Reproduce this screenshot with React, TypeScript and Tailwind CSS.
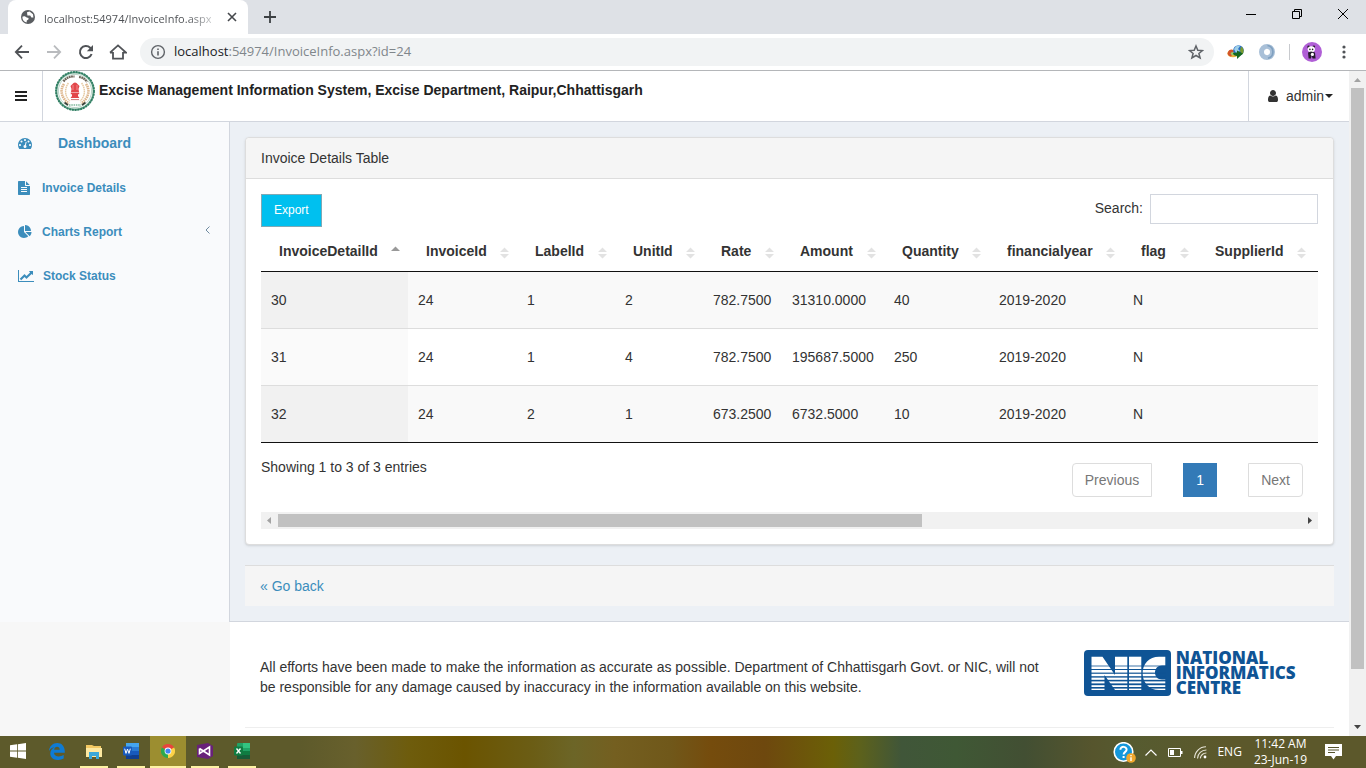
import React from "react";

const faPaths = {
  dashboard:
    "M384 1152q0-53-37.5-90.5t-90.5-37.5-90.5 37.5-37.5 90.5 37.5 90.5 90.5 37.5 90.5-37.5 37.5-90.5zm192-448q0-53-37.5-90.5t-90.5-37.5-90.5 37.5-37.5 90.5 37.5 90.5 90.5 37.5 90.5-37.5 37.5-90.5zm428 481l101-382q6-26-7.5-48.5t-38.5-29.5-48 6.5-30 39.5l-101 382q-60 5-107 43.5t-63 98.5q-20 77 20 146t117 89 146-20 89-117q16-60-6-117t-72-91zm660-33q0-53-37.5-90.5t-90.5-37.5-90.5 37.5-37.5 90.5 37.5 90.5 90.5 37.5 90.5-37.5 37.5-90.5zm-640-640q0-53-37.5-90.5t-90.5-37.5-90.5 37.5-37.5 90.5 37.5 90.5 90.5 37.5 90.5-37.5 37.5-90.5zm448 192q0-53-37.5-90.5t-90.5-37.5-90.5 37.5-37.5 90.5 37.5 90.5 90.5 37.5 90.5-37.5 37.5-90.5zm320 448q0 261-141 483-19 29-54 29h-1402q-35 0-54-29-141-221-141-483 0-182 71-348t191-286 286-191 348-71 348 71 286 191 191 286 71 348z",
  file:
    "M1596 476q14 14 28 36h-472v-472q22 14 36 28zm-476 164h544v1056q0 40-28 68t-68 28h-1344q-40 0-68-28t-28-68v-1600q0-40 28-68t68-28h800v544q0 40 28 68t68 28zm160 736v-64q0-14-9-23t-23-9h-704q-14 0-23 9t-9 23v64q0 14 9 23t23 9h704q14 0 23-9t9-23zm0-256v-64q0-14-9-23t-23-9h-704q-14 0-23 9t-9 23v64q0 14 9 23t23 9h704q14 0 23-9t9-23zm0-256v-64q0-14-9-23t-23-9h-704q-14 0-23 9t-9 23v64q0 14 9 23t23 9h704q14 0 23-9t9-23z",
  pie:
    "M768 890l546 546q-106 108-247.5 168t-298.5 60q-209 0-385.5-103t-279.5-279.5-103-385.5 103-385.5 279.5-279.5 385.5-103v762zm187 6h773q0 157-60 298.5t-168 247.5zm709-128h-768v-768q209 0 385.5 103t279.5 279.5 103 385.5z",
  line:
    "M2048 1536v128h-2048v-1536h128v1408h1920zm-128-1248v435q0 21-19.5 29.5t-35.5-7.5l-121-121-633 633q-10 10-23 10t-23-10l-233-233-416 416-192-192 585-585q10-10 23-10t23 10l233 233 464-464-121-121q-16-16-7.5-35.5t29.5-19.5h435q14 0 23 9t9 23z",
  user:
    "M1536 1399q0 109-62.5 187t-150.5 78h-854q-88 0-150.5-78t-62.5-187q0-85 8.5-160.5t31.5-152 58.5-131 94-89 134.5-34.5q131 128 313 128t313-128q76 0 134.5 34.5t94 89 58.5 131 31.5 152 8.5 160.5zm-256-887q0 159-112.5 271.5t-271.5 112.5-271.5-112.5-112.5-271.5 112.5-271.5 271.5-112.5 271.5 112.5 112.5 271.5z",
};

function Fa({ d, box = "0 0 1792 1792", className }: { d: string; box?: string; className: string }) {
  return (
    <svg viewBox={box} className={className} fill="currentColor" aria-hidden="true">
      <path d={d} />
    </svg>
  );
}

function TabStrip() {
  return (
    <div className="flex h-[34px] shrink-0 items-stretch bg-[#dee1e6]">
      <div className="ml-2 flex w-[240px] items-center rounded-t-lg bg-white pl-3 pr-2">
        <svg viewBox="0 0 16 16" className="size-4 shrink-0" aria-hidden="true">
          <circle cx="8" cy="8" r="7" fill="#5a5d61" />
          <path d="M2.4 7.8 C4 6.6 5.8 7.6 6.6 8.6 L8.6 9 L8.4 10.6 L6.8 11.4 L6.6 13.6 C3.8 13 2.2 10.6 2.4 7.8Z" fill="#fff" />
          <path d="M7 3.2 L9.6 2.6 L13 5.2 L13.4 8.6 L11.4 8.4 L10.2 6.6 L7.4 6.4 Z" fill="#fff" />
        </svg>
        <span className="ml-2 flex-1 whitespace-nowrap">
          <span className="bg-gradient-to-r from-[#4a4d51] from-85% to-[#c4c6c8] bg-clip-text text-[11px] text-transparent">
            localhost:54974/InvoiceInfo.aspx
          </span>
        </span>
        <button aria-label="Close tab" className="flex size-4 items-center justify-center">
          <svg viewBox="0 0 10 10" className="size-[10px]" stroke="#45484c" strokeWidth="1.6" aria-hidden="true">
            <path d="M1 1L9 9M9 1L1 9" />
          </svg>
        </button>
      </div>
      <button aria-label="New tab" className="ml-3 flex w-5 items-center justify-center">
        <svg viewBox="0 0 12 12" className="size-3" stroke="#3c4043" strokeWidth="1.8" aria-hidden="true">
          <path d="M6 0V12M0 6H12" />
        </svg>
      </button>
      <div className="ml-auto flex h-7">
        <button aria-label="Minimize" className="flex w-[46px] items-center justify-center">
          <svg viewBox="0 0 10 10" className="size-[10px]" stroke="#000" aria-hidden="true"><path d="M0 5.5H10" /></svg>
        </button>
        <button aria-label="Restore" className="flex w-[46px] items-center justify-center">
          <svg viewBox="0 0 10 10" className="size-[10px]" stroke="#000" fill="none" aria-hidden="true"><path d="M.5 2.5H7.5V9.5H.5ZM2.5 2.5V.5H9.5V7.5H7.5" /></svg>
        </button>
        <button aria-label="Close window" className="flex w-[46px] items-center justify-center">
          <svg viewBox="0 0 10 10" className="size-[10px]" stroke="#000" aria-hidden="true"><path d="M0 0L10 10M10 0L0 10" /></svg>
        </button>
      </div>
    </div>
  );
}

function Toolbar() {
  return (
    <div className="flex h-[37px] shrink-0 items-center border-b border-[#b4b6b9] bg-white pl-3 pr-[14px]">
      <button aria-label="Back" className="flex w-5 justify-center">
        <svg viewBox="0 0 16 16" className="size-4" stroke="#505357" strokeWidth="1.8" fill="none" aria-hidden="true"><path d="M15 8H2M8 1.6L1.8 8L8 14.4" /></svg>
      </button>
      <button aria-label="Forward" className="ml-3 flex w-5 justify-center">
        <svg viewBox="0 0 16 16" className="size-4" stroke="#b9bbbe" strokeWidth="1.8" fill="none" aria-hidden="true"><path d="M1 8H14M8 1.6L14.2 8L8 14.4" /></svg>
      </button>
      <button aria-label="Reload" className="ml-3 flex w-5 justify-center">
        <svg viewBox="0 0 16 16" className="size-4" stroke="#505357" strokeWidth="2" fill="none" aria-hidden="true">
          <path d="M13.6 10A6 6 0 1 1 12.2 3.8L13.6 5.4" />
          <path d="M15 1V7.2H8.8Z" fill="#505357" stroke="none" />
        </svg>
      </button>
      <button aria-label="Home" className="ml-3 flex w-5 justify-center">
        <svg viewBox="0 0 18 16" className="h-4 w-[18px]" stroke="#505357" strokeWidth="1.8" fill="none" aria-hidden="true"><path d="M4 8V14.6H14V8M1 8.6L9 1.4L17 8.6H14M1 8.6H4" /></svg>
      </button>
      <div className="ml-3 flex h-7 flex-1 items-center rounded-full bg-[#f1f3f4] pl-[10px] pr-[10px]">
        <svg viewBox="0 0 16 16" className="size-4" aria-hidden="true">
          <circle cx="8" cy="8" r="6.4" fill="none" stroke="#5f6368" strokeWidth="1.4" />
          <path d="M8 7.2V11.4M8 4.4V6" stroke="#5f6368" strokeWidth="1.6" />
        </svg>
        <span className="ml-2 flex-1 text-[13px] text-[#80868b]">
          <span className="text-[#202124]">localhost</span>:54974/InvoiceInfo.aspx?id=24
        </span>
        <button aria-label="Bookmark this page">
          <svg viewBox="0 0 16 16" className="size-4" fill="none" stroke="#5f6368" strokeWidth="1.5" aria-hidden="true"><path d="M8 2L9.8 6.3L14.5 6.6L10.9 9.5L12.1 14L8 11.5L3.9 14L5.1 9.5L1.5 6.6L6.2 6.3Z" /></svg>
        </button>
      </div>
      <svg viewBox="0 0 18 16" className="ml-[13px] h-4 w-[18px]" aria-hidden="true">
        <ellipse cx="6" cy="9.5" rx="5.6" ry="3.8" fill="#e8b33c" />
        <path d="M1 8C3 4.6 6 5 7 8L4 12.6C1 12 0 10 1 8Z" fill="#d3532b" />
        <ellipse cx="6" cy="9.6" rx="2.4" ry="1.6" fill="#9bc96b" />
        <circle cx="11.5" cy="6.5" r="5.3" fill="#2a6fc5" />
        <path d="M7 5C9 1 12 1 13 2L11 5L13 7L9 9Z" fill="#9fd0e8" />
        <path d="M14 2.5C17 4 17.4 8 15.4 10.4L13 7Z" fill="#7a9c2f" />
        <path d="M6 9L10 8.4V6.4L16 9.4L10 15V12C8 12 6 11 6 9Z" fill="#17691e" />
      </svg>
      <svg viewBox="0 0 16 16" className="ml-[14px] size-4" fill="none" aria-hidden="true">
        <circle cx="8" cy="8" r="5.5" stroke="#a9c0d8" strokeWidth="5" />
        <path d="M8.5 1.5A6.5 6.5 0 0 1 9 14.2" stroke="#7fa0c0" strokeWidth="1.6" />
        <path d="M8 4.5C5.5 6 6 9 8 11.5C10.5 10 10 6 8 4.5Z" fill="#fff" />
      </svg>
      <div className="ml-[14px] h-4 w-px bg-[#c8cace]" />
      <svg viewBox="0 0 20 20" className="ml-3 size-5" aria-hidden="true">
        <circle cx="10" cy="10" r="10" fill="#b05fd6" />
        <circle cx="6.6" cy="4.9" r="1.3" fill="#241c2b" /><circle cx="11.8" cy="4.7" r="1.3" fill="#241c2b" />
        <ellipse cx="9.3" cy="7.2" rx="3.6" ry="2.9" fill="#fff" />
        <path d="M6 10.4L9 9.6L13 10.4L13.6 16.4H10.6L9.6 13.6L9 16.4H6.6Z" fill="#241c2b" />
        <ellipse cx="10.4" cy="12.4" rx="1.6" ry="1.6" fill="#fff" />
        <circle cx="7.9" cy="7.4" r=".8" fill="#241c2b" /><circle cx="10.6" cy="7.4" r=".8" fill="#241c2b" />
      </svg>
      <button aria-label="Browser menu" className="ml-[14px] flex w-4 justify-center">
        <svg viewBox="0 0 4 14" className="h-[14px] w-1" fill="#505357" aria-hidden="true"><circle cx="2" cy="2" r="1.6" /><circle cx="2" cy="7" r="1.6" /><circle cx="2" cy="12" r="1.6" /></svg>
      </button>
    </div>
  );
}

function Emblem() {
  return (
    <svg viewBox="0 0 40 40" className="size-10 shrink-0" role="img" aria-label="Government of Chhattisgarh emblem">
      <circle cx="20" cy="20" r="18.6" fill="#fff" stroke="#6fa890" strokeWidth="2" />
      <circle cx="20" cy="20" r="19" fill="none" stroke="#2e7d62" strokeWidth="1.8" strokeDasharray="2 .8" />
      <circle cx="20" cy="20" r="16.6" fill="none" stroke="#a9cbbb" strokeWidth=".8" />
      <path d="M8.5 10.5C11 7 15 5 19.5 5.6M24 6C27.5 6.4 30 8 32 11" fill="none" stroke="#6c6256" strokeWidth="2.2" strokeDasharray="1.8 .5" />
      <path d="M9 13C4.5 19 6.5 27.5 14 32.5M31 13C35.5 19 33.5 27.5 26 32.5" fill="none" stroke="#dcb489" strokeWidth="2.6" strokeDasharray="1.5 .7" />
      <path d="M13.4 12C9 18 10 26 15 30M26.6 12C31 18 30 26 25 30" fill="none" stroke="#e6caa2" strokeWidth="1.4" strokeDasharray="1.6 .5" />
      <path d="M17 13.4Q20 9.6 23 13.4L24.5 15L23.5 18L24 21H16L16.5 18L15.5 15Z" fill="#e2474b" />
      <path d="M15.8 21.6H24.2V23.2H23V25L24.4 27H15.6L17 25V23.2H15.8Z" fill="#e2474b" />
      <path d="M18 14V19M22 14V19" stroke="#fbb" strokeWidth=".6" />
      <path d="M16 28.6H24" stroke="#c66" strokeWidth=".9" />
      <path d="M9.5 31.5L13 34M30.5 31.5L27 34" stroke="#3b4038" strokeWidth="1.6" />
      <path d="M14 34H26" stroke="#7fb89c" strokeWidth="1.6" strokeDasharray="1.5 .8" />
    </svg>
  );
}

function SiteHeader() {
  return (
    <header className="flex h-[51px] items-stretch border-b border-[#d2d6de] bg-white">
      <button aria-label="Toggle navigation" className="flex w-[43px] items-center justify-center border-r border-[#d2d6de]">
        <svg viewBox="0 0 12 10" className="h-[10px] w-3" fill="#222" aria-hidden="true"><path d="M0 0H12V2H0ZM0 4H12V6H0ZM0 8H12V10H0Z" /></svg>
      </button>
      <div className="flex flex-1 items-start pl-3">
        <Emblem />
        <h1 className="ml-1 mt-[9px] text-sm font-bold text-[#222]">
          Excise Management Information System, Excise Department, Raipur,Chhattisgarh
        </h1>
      </div>
      <button className="flex w-[101px] items-center border-l border-[#d2d6de] pl-[17px] text-sm text-[#333]">
        <Fa d={faPaths.user} className="size-[14px]" />
        <span className="ml-[6px]">admin</span>
        <svg viewBox="0 0 8 4" className="ml-px h-1 w-2" fill="#222" aria-hidden="true"><path d="M0 0H8L4 4Z" /></svg>
      </button>
    </header>
  );
}

function Sidebar() {
  return (
    <nav className="flex flex-col bg-[#f9fafc] font-bold text-[#3c8dbc]">
      <a href="#dashboard" className="flex h-11 items-center pb-[2px] pl-[18px] text-sm">
        <Fa d={faPaths.dashboard} className="size-[14px]" />
        <span className="ml-[26px]">Dashboard</span>
      </a>
      <a href="#invoice" className="flex h-11 items-center pl-[17px] text-xs">
        <Fa d={faPaths.file} className="size-[14px]" />
        <span className="ml-[11px]">Invoice Details</span>
      </a>
      <a href="#charts" className="flex h-11 items-center pl-[18px] pr-[19px] text-xs">
        <Fa d={faPaths.pie} className="size-[14px]" />
        <span className="ml-[10px] flex-1">Charts Report</span>
        <svg viewBox="0 0 5 8" className="mb-1 h-2 w-[5px]" fill="none" stroke="#6f8aa0" aria-hidden="true"><path d="M4.5 .5L1 4L4.5 7.5" /></svg>
      </a>
      <a href="#stock" className="flex h-11 items-center pl-[18px] text-xs">
        <Fa d={faPaths.line} box="0 0 2048 1792" className="h-[14px] w-4" />
        <span className="ml-[9px]">Stock Status</span>
      </a>
    </nav>
  );
}

const columns = [
  { name: "InvoiceDetailId", width: "w-[147px]" },
  { name: "InvoiceId", width: "w-[109px]" },
  { name: "LabelId", width: "w-[98px]" },
  { name: "UnitId", width: "w-[88px]" },
  { name: "Rate", width: "w-[79px]" },
  { name: "Amount", width: "w-[102px]" },
  { name: "Quantity", width: "w-[105px]" },
  { name: "financialyear", width: "w-[134px]" },
  { name: "flag", width: "w-[74px]" },
  { name: "SupplierId", width: "" },
];

const rows = [
  ["30", "24", "1", "2", "782.7500", "31310.0000", "40", "2019-2020", "N", ""],
  ["31", "24", "1", "4", "782.7500", "195687.5000", "250", "2019-2020", "N", ""],
  ["32", "24", "2", "1", "673.2500", "6732.5000", "10", "2019-2020", "N", ""],
];

function InvoiceTable() {
  return (
    <table className="w-full table-fixed border-collapse text-sm">
      <thead>
        <tr className="border-b border-[#111]">
          {columns.map((c, i) => (
            <th key={c.name} scope="col" className={`h-11 p-0 pt-1 text-left font-bold ${c.width}`}>
              <button className={`flex w-full items-center justify-between pl-[18px] ${i === 9 ? "pr-3" : "pr-2"}`}>
                <span>{c.name}</span>
                {i === 0 ? (
                  <svg viewBox="0 0 9 12" className="h-3 w-[9px]" fill="#999" aria-hidden="true"><path d="M0 6H9L4.5 1.5Z" /></svg>
                ) : (
                  <svg viewBox="0 0 9 12" className="mt-1 h-3 w-[9px]" fill="#e2e2e2" aria-hidden="true"><path d="M0 5H9L4.5 .5ZM0 7H9L4.5 11.5Z" /></svg>
                )}
              </button>
            </th>
          ))}
        </tr>
      </thead>
      <tbody>
        {rows.map((r, n) => (
          <tr key={r[0]} className="h-[57px] border-b border-[#ddd] bg-white last:border-[#111] odd:bg-[#f9f9f9]">
            {r.map((v, i) => (
              <td key={i} className={`px-[10px] py-0 ${i === 0 ? (n % 2 ? "bg-[#fafafa]" : "bg-[#f1f1f1]") : ""}`}>{v}</td>
            ))}
          </tr>
        ))}
      </tbody>
    </table>
  );
}

function InvoicePanel() {
  return (
    <section className="rounded border border-[#ddd] bg-white shadow-sm">
      <h2 className="rounded-t border-b border-[#ddd] bg-[#f5f5f5] px-[15px] py-[10px] text-sm">Invoice Details Table</h2>
      <div className="p-[15px]">
        <div className="flex items-start justify-between">
          <button className="h-[33px] border border-[#7fa9b5] bg-[#00c0ef] px-3 pb-[2px] text-xs text-white">Export</button>
          <label className="flex items-start text-sm leading-7">
            Search:
            <input type="search" className="ml-[7px] h-[30px] w-[168px] border border-[#d2d6de] bg-white px-2 outline-none" />
          </label>
        </div>
        <InvoiceTable />
        <div className="flex h-[69px] items-start justify-between pr-[15px]">
          <p className="mt-[14px]">Showing 1 to 3 of 3 entries</p>
          <div className="mt-5 flex gap-[31px] text-[#777]">
            <button className="h-[34px] rounded-l border border-[#ddd] px-3">Previous</button>
            <button className="h-[34px] w-[34px] bg-[#337ab7] text-white">1</button>
            <button className="h-[34px] rounded-r border border-[#ddd] px-3">Next</button>
          </div>
        </div>
        <div className="flex h-[17px] items-center bg-[#f1f1f1] px-[6px]">
          <svg viewBox="0 0 4 7" className="h-[7px] w-1" fill="#a3a3a3" aria-hidden="true"><path d="M4 0V7L0 3.5Z" /></svg>
          <div className="mx-[7px] flex-1"><div className="h-[13px] w-[63%] bg-[#c1c1c1]" /></div>
          <svg viewBox="0 0 4 7" className="h-[7px] w-1" fill="#444" aria-hidden="true"><path d="M0 0V7L4 3.5Z" /></svg>
        </div>
      </div>
    </section>
  );
}

function NicLogo() {
  return (
    <div className="flex items-center gap-[5px]">
      <svg viewBox="0 0 87 46" className="h-[46px] w-[87px] shrink-0" role="img" aria-label="NIC">
        <rect width="87" height="46" rx="4" fill="#0f5495" />
        <g fill="#fff">
          <path d="M7.5 6.7H18.5L31 25V6.7H43.3V40H31L20.5 25V40H7.5Z" />
          <path d="M45 6.7H57.3V40H45Z" />
          <path d="M81.3 6.7V15.4H78C73.5 15.4 71 18.6 71 22.6C71 26.8 73.8 29.6 78 29.6H81.3V40H75C65 40 58.6 32.4 58.6 23.2C58.6 14 65 6.7 75 6.7Z" />
        </g>
        <g fill="#0f5495">
          <rect x="6" y="15.6" width="76" height=".8" />
          <rect x="6" y="19" width="76" height="1" />
          <rect x="6" y="22.6" width="76" height="1.2" />
          <rect x="6" y="26.2" width="76" height="1.4" />
          <rect x="6" y="29.8" width="76" height="1.6" />
          <rect x="6" y="33.4" width="76" height="1.8" />
          <rect x="6" y="37" width="76" height="1.6" />
        </g>
      </svg>
      <p className="font-['Open_Sans','Noto_Sans',sans-serif] text-[17px] font-extrabold leading-[15px] text-[#0f5495]">
        NATIONAL<br />INFORMATICS<br />CENTRE
      </p>
    </div>
  );
}

function PageScrollbar() {
  return (
    <div className="flex w-[17px] shrink-0 flex-col items-center bg-[#f1f1f1] py-[7px]">
      <svg viewBox="0 0 7 4" className="h-1 w-[7px] shrink-0" fill="#a3a3a3" aria-hidden="true"><path d="M0 4H7L3.5 0Z" /></svg>
      <div className="my-[6px] w-[13px] flex-1"><div className="h-[92%] bg-[#c1c1c1]" /></div>
      <svg viewBox="0 0 7 4" className="h-1 w-[7px] shrink-0" fill="#444" aria-hidden="true"><path d="M0 0H7L3.5 4Z" /></svg>
    </div>
  );
}

function TaskIcon({ label, open, active, children }: { label: string; open?: boolean; active?: boolean; children: React.ReactNode }) {
  return (
    <button
      aria-label={label}
      className={`flex h-full flex-col items-center ${active ? "w-9 bg-[#9c8e30]" : "w-7"}`}
    >
      <span className="flex w-full flex-1 items-center justify-center">{children}</span>
      <span className={`h-[2px] w-full ${open ? "bg-[#fdf3a4]" : ""}`} />
    </button>
  );
}

function Taskbar() {
  return (
    <footer className="flex h-8 shrink-0 items-stretch bg-[linear-gradient(90deg,#5d5a2b_0%,#5d5a2b_22%,#68602c_26%,#6e5c0c_30%,#6b5400_34%,#6b5d15_39%,#6c6527_42%,#745f20_45%,#70581a_49%,#754c0d_52%,#6e480e_56%,#6b6007_61%,#5c611c_63%,#405639_66%,#3f5835_70%,#424f33_75%,#56552d_80%,#565b30_83%,#5c582b_90%,#5c582b_100%)] text-white">
      <div className="flex items-stretch gap-[9px] pl-1">
        <TaskIcon label="Start">
          <svg viewBox="0 0 16 16" className="size-4" fill="#fff" aria-hidden="true"><path d="M0 2.2L7 1.3V7.6H0ZM7.8 1.2L16 0V7.6H7.8ZM0 8.4H7V14.7L0 13.8ZM7.8 8.4H16V16L7.8 14.8Z" /></svg>
        </TaskIcon>
        <div className="ml-[2px] flex"><TaskIcon label="Edge">
          <svg viewBox="0 0 16 17" className="h-[17px] w-4" aria-hidden="true"><path d="M0 8C.3 3 4 0 8.2 0C13 0 16 3.5 15.8 9.8H5C5.2 14 11 14.3 14.7 12V15.6C9 18.5 1.3 17 1.3 10.5C1.3 7.5 3 5.3 5.6 4.2C2.5 4.7 1 6 0 8ZM5.1 6.7H10.8C10.8 2.8 5.5 2.8 5.1 6.7Z" fill="#0f7bd4" fillRule="evenodd" /></svg>
        </TaskIcon></div>
        <TaskIcon label="File Explorer" open>
          <svg viewBox="0 0 16 15" className="h-[15px] w-4" aria-hidden="true"><path d="M0 1H6L8 2H15V13H0Z" fill="#f3c962" /><path d="M0 4H16V13H0Z" fill="#fde9a1" /><path d="M3 15V8H13V15H10V12H6V15Z" fill="#3aa8d8" /></svg>
        </TaskIcon>
        <TaskIcon label="Word" open>
          <svg viewBox="0 0 16 16" className="size-4" aria-hidden="true"><rect x="3" width="13" height="16" rx="1" fill="#2b7cd3" /><rect x="3" width="13" height="4" fill="#45a5ee" /><rect x="3" y="8" width="13" height="4" fill="#185abd" /><rect x="3" y="12" width="13" height="4" fill="#103f91" /><rect y="3.5" width="9" height="9" rx="1" fill="#185abd" /><path d="M1.7 5.7L3 10.4L4.5 6L6 10.4L7.3 5.7" stroke="#fff" fill="none" /></svg>
        </TaskIcon>
        <div className="-mx-1 flex"><TaskIcon label="Chrome" open active>
          <svg viewBox="0 0 14 14" className="size-[14px]" aria-hidden="true"><path d="M7 7L.9 3.5A7 7 0 0 1 13.1 3.5Z" fill="#e8453c" /><path d="M7 7L13.1 3.5A7 7 0 0 1 7 14Z" fill="#fdd247" /><path d="M7 7L7 14A7 7 0 0 1 .9 3.5Z" fill="#2da94f" /><circle cx="7" cy="7" r="3.4" fill="#fff" /><circle cx="7" cy="7" r="2.6" fill="#4285f4" /></svg>
        </TaskIcon></div>
        <TaskIcon label="Visual Studio" open>
          <svg viewBox="0 0 16 16" className="size-4" aria-hidden="true"><path d="M0 2L11 0L16 3V13L11 16L0 14Z" fill="#68217a" /><path d="M2.5 5.5V10.5L12.5 4V12L2.5 5.5" fill="none" stroke="#fff" strokeWidth="1.6" /></svg>
        </TaskIcon>
        <TaskIcon label="Excel" open>
          <svg viewBox="0 0 16 16" className="size-4" aria-hidden="true"><rect x="3" width="13" height="16" rx="1" fill="#21a366" /><rect x="9" width="7" height="5" fill="#33c481" /><rect x="3" y="8" width="13" height="8" fill="#185c37" /><rect x="9" y="8" width="7" height="4" fill="#107c41" /><rect y="3.5" width="9" height="9" rx="1" fill="#107c41" /><path d="M2.5 5.5L6.5 10.5M6.5 5.5L2.5 10.5" stroke="#fff" strokeWidth="1.3" /></svg>
        </TaskIcon>
      </div>
      <div className="ml-auto flex items-center pr-6 text-xs">
        <svg viewBox="0 0 23 21" className="h-[21px] w-[23px]" aria-hidden="true">
          <circle cx="10.5" cy="10" r="9.3" fill="#1497db" stroke="#fff" strokeWidth="1.6" />
          <path d="M7.4 7.8C7.4 3.8 13.8 4 13.6 7.8C13.5 10 10.6 9.8 10.6 12.6M10.6 14V16" stroke="#fff" strokeWidth="2" fill="none" />
          <circle cx="18" cy="16" r="4.8" fill="#f0a72c" /><path d="M18 13V14.3M18 15.2V19" stroke="#fff" strokeWidth="1.4" />
        </svg>
        <svg viewBox="0 0 12 7" className="ml-[9px] h-[7px] w-3" fill="none" stroke="#fff" strokeWidth="1.2" aria-hidden="true"><path d="M.5 6.5L6 1L11.5 6.5" /></svg>
        <svg viewBox="0 0 15 9" className="ml-[11px] h-[9px] w-[15px]" aria-hidden="true"><path d="M.5 .5H12.5V8.5H.5Z" fill="none" stroke="#fff" /><path d="M2 2H6V7H2ZM13 3H14.5V6H13Z" fill="#fff" /></svg>
        <svg viewBox="0 0 13 13" className="ml-[11px] size-[13px]" fill="none" stroke="#e8e6d8" strokeWidth="1.1" aria-hidden="true"><path d="M.6 12A11.4 11.4 0 0 1 12 .8M3.5 12.4A8.8 8.8 0 0 1 12.4 4M6.3 12.4A6 6 0 0 1 12.4 7" /><circle cx="11" cy="11" r="1.4" fill="#fff" stroke="none" /></svg>
        <span className="ml-[10px]">ENG</span>
        <div className="ml-3 text-center leading-4"><div>11:42 AM</div><div>23-Jun-19</div></div>
        <svg viewBox="0 0 17 16" className="ml-[18px] h-4 w-[17px]" aria-hidden="true"><path d="M0 0H17V12H11L8.5 15.5L6 12H0Z" fill="#fff" /><path d="M3 3.5H14M3 6H14M3 8.5H10" stroke="#56532b" /></svg>
      </div>
    </footer>
  );
}

export default function App() {
  return (
    <div className="flex h-screen flex-col overflow-hidden bg-white font-['Open_Sans','Noto_Sans',sans-serif]">
      <TabStrip />
      <Toolbar />
      <div className="flex min-h-0 flex-1 overflow-hidden font-['Liberation_Sans',Arial,sans-serif] text-sm text-[#333]">
        <div className="min-w-0 flex-1 overflow-hidden bg-[#f7f7f7]">
          <SiteHeader />
          <div className="grid grid-cols-[229px_minmax(0,1fr)]">
            <Sidebar />
            <main className="flex flex-col gap-5 border-b border-l border-[#d2d6de] bg-[#ecf0f5] p-[15px]">
              <InvoicePanel />
              <div className="border-t border-[#ddd] bg-[#f5f5f5] px-[15px] py-[10px]">
                <a href="#back" className="text-[#3c8dbc]">« Go back</a>
              </div>
            </main>
          </div>
          <div className="ml-[230px] bg-white px-[15px] pt-[26px]">
            <div className="grid grid-cols-4 border-b border-[#eee] pb-[30px]">
              <p className="col-span-3 px-[15px] pt-[9px]">
                All efforts have been made to make the information as accurate as possible. Department of Chhattisgarh Govt. or NIC, will not be responsible for any damage caused by inaccuracy in the information available on this website.
              </p>
              <div className="pl-[22px] pt-[2px]"><NicLogo /></div>
            </div>
            <div className="h-10" />
          </div>
        </div>
        <PageScrollbar />
      </div>
      <Taskbar />
    </div>
  );
}
